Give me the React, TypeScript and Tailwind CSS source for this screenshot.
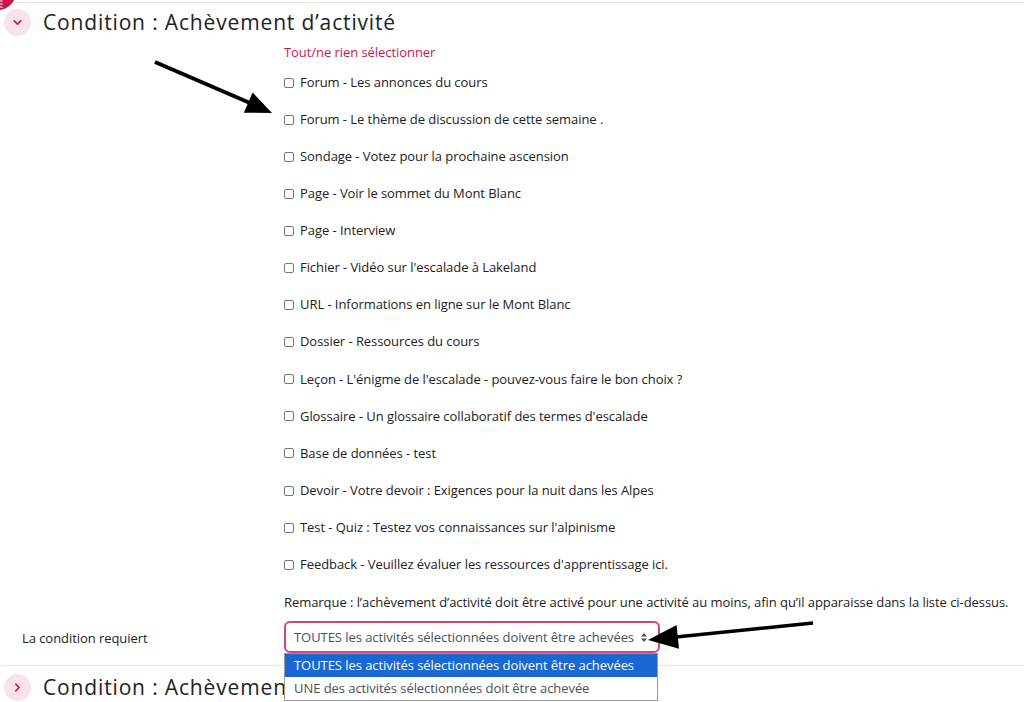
import { Menu } from 'lucide-react';

const activities = [
  'Forum - Les annonces du cours',
  'Forum - Le thème de discussion de cette semaine .',
  'Sondage - Votez pour la prochaine ascension',
  'Page - Voir le sommet du Mont Blanc',
  'Page - Interview',
  "Fichier - Vidéo sur l'escalade à Lakeland",
  'URL - Informations en ligne sur le Mont Blanc',
  'Dossier - Ressources du cours',
  "Leçon - L'énigme de l'escalade - pouvez-vous faire le bon choix ?",
  "Glossaire - Un glossaire collaboratif des termes d'escalade",
  'Base de données - test',
  'Devoir - Votre devoir : Exigences pour la nuit dans les Alpes',
  "Test - Quiz : Testez vos connaissances sur l'alpinisme",
  "Feedback - Veuillez évaluer les ressources d'apprentissage ici.",
];

const font = { fontFamily: '"Open Sans", "Liberation Sans", sans-serif' };

// Round pink toggle used by each collapsible section header
const Toggle = ({ open }: { open: boolean }) => (
  <div className="w-[27px] h-[27px] rounded-full bg-[#f9e2e8] flex items-center justify-center shrink-0">
    <svg width="11" height="11" viewBox="0 0 10 10" fill="none" stroke="#c8174a" strokeWidth="1.5" strokeLinecap="round" strokeLinejoin="round">
      {open ? <path d="M2 3.5 L5 6.5 L8 3.5" /> : <path d="M3.5 2 L6.5 5 L3.5 8" />}
    </svg>
  </div>
);

const App = () => {
  return (
    <div className="relative w-[1024px] h-[702px] overflow-hidden bg-white text-[#1d2125]" style={font}>
      {/* Floating drawer button, mostly off-screen */}
      <div className="absolute -left-[20px] -top-[26px] w-[36px] h-[36px] rounded-full bg-[#c8174a] z-10 flex items-end justify-end pr-[12px] pb-[1px]">
        <Menu size={10} color="white" strokeWidth={2.5} />
      </div>

      <div className="mt-[2px] border-t border-[#e6e6e6]">
        {/* Section header */}
        <div className="h-[38px] flex items-center pl-[4px] gap-[12px]">
          <Toggle open />
          <h3 className="text-[21px] tracking-[0.85px] leading-none">Condition : Achèvement d’activité</h3>
        </div>

        <div className="ml-[284px] text-[13px] tracking-[-0.06px]">
          <div className="h-[23px] flex items-center text-[#c8174a]">Tout/ne rien sélectionner</div>
          {activities.map((a) => (
            <label key={a} className="h-[37.1px] flex items-center gap-[6px]">
              <span className="w-[10px] h-[10px] border border-[#767676] rounded-[2px] bg-white" />
              <span>{a}</span>
            </label>
          ))}
          <div className="h-[38px] flex items-center">
            Remarque : l’achèvement d’activité doit être activé pour une activité au moins, afin qu’il apparaisse dans la liste ci-dessus.
          </div>
        </div>

        <div className="flex items-center text-[13px] tracking-[-0.06px]">
          <div className="w-[284px] pl-[22px] pt-[2px]">La condition requiert</div>
          <div className="relative">
            <div className="w-[376px] h-[32px] border-2 border-[#d9466c] rounded-md flex items-center justify-between pl-[8px] pr-[11px] text-[#495057]">
              <span>TOUTES les activités sélectionnées doivent être achevées</span>
              <svg width="6" height="9" viewBox="0 0 6 9" fill="#495057">
                <path d="M3 0 L6 3.5 H0 Z" />
                <path d="M3 9 L6 5.5 H0 Z" />
              </svg>
            </div>
            {/* Open options list */}
            <div className="absolute left-0 top-full w-[374px] border border-[#9a9a9a] bg-white z-10">
              <div className="h-[23px] flex items-center pl-[9px] bg-[#1967d2] text-white">
                TOUTES les activités sélectionnées doivent être achevées
              </div>
              <div className="h-[23px] flex items-center pl-[9px] text-[#495057]">
                UNE des activités sélectionnées doit être achevée
              </div>
            </div>
          </div>
        </div>
      </div>

      {/* Next collapsed section */}
      <div className="mt-[12px] ml-[2px] border-t border-[#e6e6e6]">
        <div className="h-[42px] flex items-center pl-[2px] gap-[12px]">
          <Toggle open={false} />
          <h3 className="text-[21px] tracking-[0.85px] leading-none">Condition : Achèvement d’activité</h3>
        </div>
      </div>

      {/* Annotation arrows */}
      <svg className="absolute inset-0 pointer-events-none z-20" width="1024" height="702">
        <line x1="155" y1="62" x2="250" y2="103" stroke="black" strokeWidth="4" />
        <polygon points="272,113 243.8,112.7 252.6,92.5" fill="black" />
        <line x1="813" y1="623" x2="676" y2="637" stroke="black" strokeWidth="3.5" />
        <polygon points="648,640 676.6,625 679,648.8" fill="black" />
      </svg>
    </div>
  );
};

export default App;
